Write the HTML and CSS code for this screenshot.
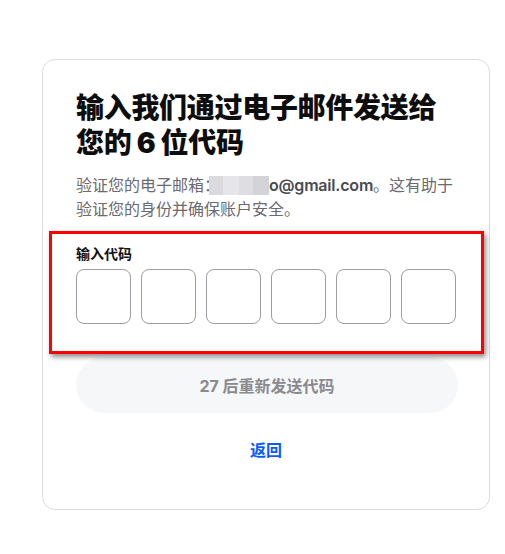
FILE: index.html
```html
<!DOCTYPE html>
<html lang="zh-CN">
<head>
<meta charset="utf-8">
<link rel="stylesheet" href="styles.css">
</head>
<body>
<div class="card">
  <h1 class="title">输入我们通过电子邮件发送给您的 6 位代码</h1>
  <p class="sub">验证您的电子邮箱：<span class="blur"><span class="b1"></span><span class="b2"></span><span class="b3"></span><span class="b4"></span></span><span class="mail">o@gmail.com</span>。这有助于验证您的身份并确保账户安全。</p>
  <div class="label">输入代码</div>
  <div class="boxes">
    <div class="box"></div><div class="box"></div><div class="box"></div>
    <div class="box"></div><div class="box"></div><div class="box"></div>
  </div>
  <div class="resend">27 后重新发送代码</div>
  <div class="back">返回</div>
  <div class="highlight"></div>
</div>
</body>
</html>
```
FILE: styles.css
```css
html, body { margin: 0; background: #fff; }
body {
  padding: 59px 0 0 42px;
  font-family: Inter, "Noto Sans CJK SC", sans-serif;
  color: #111;
}
.card {
  position: relative;
  box-sizing: border-box;
  width: 448px;
  height: 451px;
  border: 1px solid #dcdcdc;
  border-radius: 13px;
  padding: 31px 33px 0 33px;
}
.title {
  margin: 0;
  font-size: 28px;
  line-height: 35px;
  font-weight: 900;
  color: #0d0d0d;
  letter-spacing: -0.3px;
}
.sub {
  margin: 12px 0 0 0;
  font-size: 16px;
  line-height: 24px;
  color: #6a6a70;
}
.blur {
  display: inline-flex;
  vertical-align: -4px;
  width: 60px;
  height: 19px;
  margin-left: -11px;
  background: #e4e4e8;
}
.blur span { display: block; height: 100%; }
.b1 { width: 14px; background: #d9d9de; }
.b2 { width: 16px; background: #e6e6ea; }
.b3 { width: 14px; background: #dedee2; }
.b4 { width: 16px; background: #d4d4d8; }
.mail {
  font-weight: 600;
  color: #4a4a50;
  letter-spacing: -0.2px;
}
.label {
  margin-top: 23px;
  font-size: 14px;
  line-height: 20px;
  font-weight: 700;
  color: #111;
}
.boxes {
  display: flex;
  gap: 10px;
  margin-top: 5px;
}
.box {
  box-sizing: border-box;
  width: 55px;
  height: 55px;
  border: 1px solid #9c9ca4;
  border-radius: 8px;
}
.resend {
  margin-top: 33px;
  height: 56px;
  width: 382px;
  border-radius: 28px;
  background: #f6f7f9;
  display: flex;
  align-items: center;
  justify-content: center;
  font-size: 16px;
  font-weight: 700;
  color: #8a8a8e;
}
.back {
  margin-top: 25px;
  text-align: center;
  font-size: 16px;
  line-height: 24px;
  font-weight: 700;
  color: #0a5cff;
}
.highlight {
  position: absolute;
  left: 6px;
  top: 171px;
  width: 435px;
  height: 123px;
  box-sizing: border-box;
  border: 3px solid #ff0000;
  box-shadow: 2px 3px 5px rgba(0,0,0,0.45);
}
```
